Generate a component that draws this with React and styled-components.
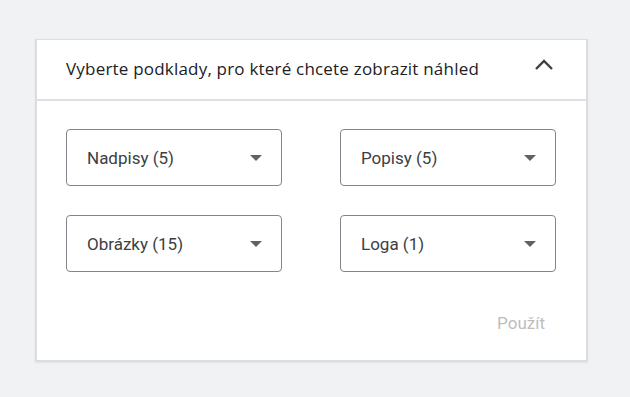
import React from 'react';
import styled, { createGlobalStyle } from 'styled-components';

const GlobalStyle = createGlobalStyle`
  html, body {
    margin: 0;
    padding: 0;
    background: #f1f2f4;
    font-family: Roboto, 'Liberation Sans', sans-serif;
  }
`;

const Page = styled.div`
  width: 630px;
  height: 397px;
  padding: 39px 0 0 35px;
  box-sizing: border-box;
`;

const Card = styled.section`
  width: 553px;
  background: #fff;
  border: 2px solid #dcdde0;
  border-top-width: 1px;
  box-sizing: border-box;
  box-shadow: 0 1px 2px rgba(0, 0, 0, 0.06);
`;

const Header = styled.header`
  height: 59px;
  display: flex;
  align-items: center;
  justify-content: space-between;
  padding: 0 32px 0 29px;
  border-bottom: 2px solid #dfe0e2;
`;

const Title = styled.h2`
  margin: 0;
  padding-bottom: 3px;
  font-family: 'Open Sans', Roboto, sans-serif;
  font-size: 17px;
  letter-spacing: 0.2px;
  font-weight: 400;
  color: #202124;
`;

const Chevron = styled.svg`
  margin-bottom: 12px;
`;

const Body = styled.div`
  padding: 28px 30px 26px 29px;
`;

const Grid = styled.div`
  display: grid;
  grid-template-columns: 216px 216px;
  column-gap: 58px;
  row-gap: 29px;
`;

const Select = styled.div`
  height: 57px;
  border: 1px solid #80868b;
  border-radius: 4px;
  box-sizing: border-box;
  display: flex;
  align-items: center;
  justify-content: space-between;
  padding: 0 19px 0 20px;
  font-size: 17px;
  color: #3c4043;
`;

const Caret = styled.span`
  width: 0;
  height: 0;
  border-left: 6px solid transparent;
  border-right: 6px solid transparent;
  border-top: 6px solid #5f6368;
`;

const Footer = styled.div`
  display: flex;
  justify-content: flex-end;
  margin-top: 40px;
  height: 22px;
`;

const ApplyButton = styled.button`
  border: none;
  background: none;
  padding: 0 11px 0 0;
  font-family: Roboto, 'Liberation Sans', sans-serif;
  font-size: 17px;
  color: #bdbdbd;
`;

const items = ['Nadpisy (5)', 'Popisy (5)', 'Obrázky (15)', 'Loga (1)'];

export default function App() {
  return (
    <>
      <GlobalStyle />
      <Page>
        <Card>
          <Header>
            <Title>Vyberte podklady, pro které chcete zobrazit náhled</Title>
            <Chevron width="20" height="12" viewBox="0 0 20 12">
              <path d="M2 11 L10 3 L18 11" fill="none" stroke="#3c4043" strokeWidth="2.4" />
            </Chevron>
          </Header>
          <Body>
            <Grid>
              {items.map((label) => (
                <Select key={label}>
                  <span>{label}</span>
                  <Caret />
                </Select>
              ))}
            </Grid>
            <Footer>
              <ApplyButton>Použít</ApplyButton>
            </Footer>
          </Body>
        </Card>
      </Page>
    </>
  );
}
